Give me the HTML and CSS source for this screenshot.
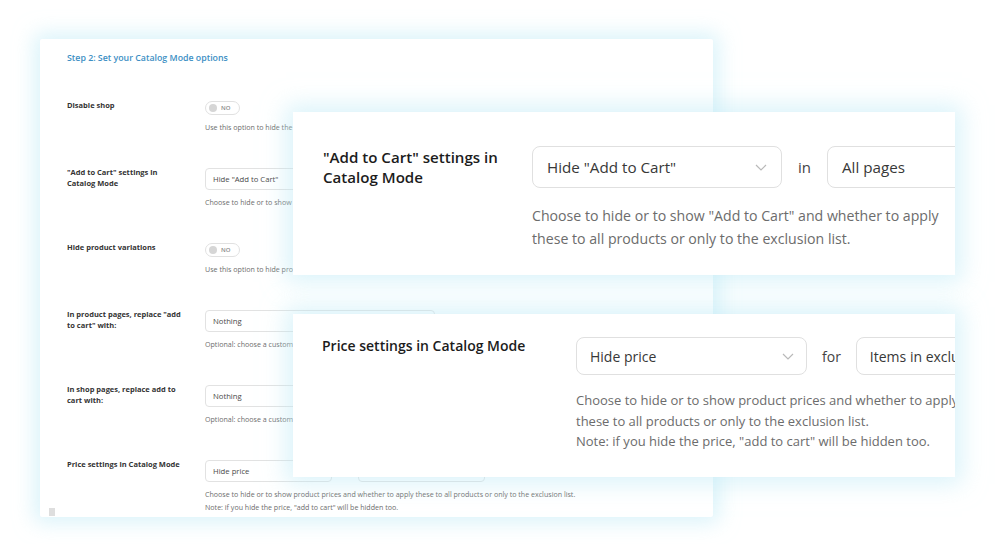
FILE: index.html
```html
<!DOCTYPE html>
<html lang="en">
<head>
<meta charset="utf-8">
<title>Catalog Mode options</title>
<link rel="stylesheet" href="styles.css">
</head>
<body>
<div class="stage">
  <section class="back">
    <h2 class="back-title">Step 2: Set your Catalog Mode options</h2>

    <div class="b-row">
      <div class="b-label">Disable shop</div>
      <div class="b-field">
        <div class="b-toggle"><span class="b-knob"></span><span class="b-toggle-text">NO</span></div>
        <p class="b-desc">Use this option to hide the "Cart" page, "Checkout" page and all the "Add to Cart" buttons in the shop.</p>
      </div>
    </div>

    <div class="b-row">
      <div class="b-label">"Add to Cart" settings in<br>Catalog Mode</div>
      <div class="b-field">
        <div class="b-controls">
          <div class="b-select b-select-sm">Hide "Add to Cart"</div>
        </div>
        <p class="b-desc">Choose to hide or to show "Add to Cart" and whether to apply these to all products or only to the exclusion list.</p>
      </div>
    </div>

    <div class="b-row">
      <div class="b-label">Hide product variations</div>
      <div class="b-field">
        <div class="b-toggle"><span class="b-knob"></span><span class="b-toggle-text">NO</span></div>
        <p class="b-desc">Use this option to hide product variations in the product pages.</p>
      </div>
    </div>

    <div class="b-row">
      <div class="b-label">In product pages, replace "add<br>to cart" with:</div>
      <div class="b-field">
        <div class="b-select b-select-lg">Nothing</div>
        <p class="b-desc">Optional: choose a custom button or content to replace "add to cart" in product pages.</p>
      </div>
    </div>

    <div class="b-row">
      <div class="b-label">In shop pages, replace add to<br>cart with:</div>
      <div class="b-field">
        <div class="b-select b-select-lg">Nothing</div>
        <p class="b-desc">Optional: choose a custom button or content to replace "add to cart" in shop pages.</p>
      </div>
    </div>

    <div class="b-row b-row-last">
      <div class="b-label">Price settings in Catalog Mode</div>
      <div class="b-field">
        <div class="b-controls b-controls-wide">
          <div class="b-select b-select-sm">Hide price</div>
          <div class="b-select b-select-sm"></div>
        </div>
        <p class="b-desc">Choose to hide or to show product prices and whether to apply these to all products or only to the exclusion list.<br>Note: if you hide the price, "add to cart" will be hidden too.</p>
      </div>
    </div>

    <span class="b-scroll"></span>
  </section>

  <section class="front f1">
    <div class="f-label">"Add to Cart" settings in<br>Catalog Mode</div>
    <div class="f-field">
      <div class="f-controls">
        <div class="f-select f-select-main">
          <span>Hide "Add to Cart"</span>
          <svg class="chev" width="12" height="7" viewBox="0 0 12 7"><polyline points="1,1 6,6 11,1"/></svg>
        </div>
        <span class="f-word">in</span>
        <div class="f-select f-select-second"><span>All pages</span></div>
      </div>
      <p class="f-desc">Choose to hide or to show "Add to Cart" and whether to apply<br>these to all products or only to the exclusion list.</p>
    </div>
  </section>

  <section class="front f2">
    <div class="f-label">Price settings in Catalog Mode</div>
    <div class="f-field">
      <div class="f-controls">
        <div class="f-select f-select-main">
          <span>Hide price</span>
          <svg class="chev" width="12" height="7" viewBox="0 0 12 7"><polyline points="1,1 6,6 11,1"/></svg>
        </div>
        <span class="f-word">for</span>
        <div class="f-select f-select-second"><span>Items in exclusion list</span></div>
      </div>
      <p class="f-desc">Choose to hide or to show product prices and whether to apply<br>these to all products or only to the exclusion list.<br>Note: if you hide the price, "add to cart" will be hidden too.</p>
    </div>
  </section>
</div>
</body>
</html>
```

FILE: styles.css
```css
html, body {
  margin: 0;
  padding: 0;
  background: #ffffff;
}

body {
  font-family: "Open Sans", "Noto Sans", sans-serif;
}

.stage {
  position: relative;
  width: 1000px;
  height: 544px;
  overflow: hidden;
  background: #ffffff;
}

/* ---------- back (small) settings panel ---------- */
.back {
  position: absolute;
  left: 40px;
  top: 39px;
  width: 673px;
  height: 478px;
  box-sizing: border-box;
  padding: 13px 0 0 27px;
  background: #ffffff;
  border-radius: 2px;
  box-shadow: 0 0 20px 6px rgba(190, 234, 246, 0.55);
  overflow: hidden;
}

.back-title {
  margin: 0 0 35.5px;
  font-size: 8.8px;
  line-height: 12px;
  font-weight: 600;
  color: #3d8fc4;
}

.b-row {
  display: grid;
  grid-template-columns: 138px 1fr;
  padding-bottom: 33px;
}

.b-row-last {
  padding-bottom: 0;
}

.b-label {
  font-size: 7.5px;
  line-height: 11px;
  font-weight: 700;
  color: #333333;
}

.b-field {
  padding-top: 1.5px;
}

.b-controls {
  display: flex;
  align-items: center;
}

.b-controls-wide {
  gap: 26px;
}

.b-toggle {
  box-sizing: border-box;
  width: 35px;
  height: 14px;
  border: 1px solid #e1e1e1;
  border-radius: 7px;
  display: flex;
  align-items: center;
  padding-left: 3px;
  gap: 4px;
  background: #ffffff;
}

.b-knob {
  width: 8px;
  height: 8px;
  border-radius: 50%;
  background: #d6d6d6;
}

.b-toggle-text {
  font-size: 6px;
  font-weight: 600;
  color: #8a8a8a;
  line-height: 8px;
}

.b-select {
  box-sizing: border-box;
  height: 22px;
  border: 1px solid #e2e2e2;
  border-radius: 4px;
  padding-left: 7px;
  display: flex;
  align-items: center;
  font-size: 7.7px;
  color: #4a4a4a;
  white-space: nowrap;
  background: #ffffff;
  flex: none;
}

.b-select-sm {
  width: 127px;
}

.b-select-lg {
  width: 230px;
}

.b-desc {
  margin: 6px 0 0;
  font-size: 7.1px;
  line-height: 12.5px;
  color: #6d6d6d;
  white-space: nowrap;
}

.b-scroll {
  position: absolute;
  left: 9px;
  bottom: 1px;
  width: 6px;
  height: 8px;
  background: #dedede;
}

/* ---------- front (zoomed) cards ---------- */
.front {
  position: absolute;
  left: 293px;
  width: 662px;
  height: 163px;
  box-sizing: border-box;
  background: #ffffff;
  display: flex;
  overflow: hidden;
  box-shadow: 0 0 22px 7px rgba(190, 234, 246, 0.55);
}

.f1 {
  top: 112px;
  padding: 34px 0 0 30px;
}

.f2 {
  top: 314px;
  padding: 23px 0 0 29px;
}

.f-label {
  flex: none;
  font-weight: 600;
  color: #1c1c1c;
}

.f1 .f-label {
  width: 209px;
  margin-top: 1px;
  font-size: 15.1px;
  line-height: 20px;
}

.f2 .f-label {
  width: 254px;
  font-size: 14px;
  line-height: 18px;
}

.f-field {
  flex: none;
  width: 600px;
}

.f-controls {
  display: flex;
  align-items: center;
}

.f1 .f-controls {
  gap: 16px;
}

.f2 .f-controls {
  gap: 15px;
}

.f-select {
  box-sizing: border-box;
  border: 1px solid #e0e0e0;
  border-radius: 8px;
  display: flex;
  align-items: center;
  justify-content: space-between;
  color: #383838;
  white-space: nowrap;
  background: #ffffff;
}

.f1 .f-select {
  height: 42px;
  padding: 0 14px;
  font-size: 15.2px;
}

.f2 .f-select {
  height: 38px;
  padding: 0 12px 0 13px;
  font-size: 14px;
}

.f1 .f-select-main {
  width: 250px;
}

.f2 .f-select-main {
  width: 231px;
}

.f-select-second {
  width: 220px;
  flex: none;
}

.chev {
  flex: none;
}

.chev polyline {
  fill: none;
  stroke: #b9b9b9;
  stroke-width: 1.2;
}

.f-word {
  color: #444444;
}

.f1 .f-word {
  font-size: 15px;
}

.f2 .f-word {
  font-size: 14px;
}

.f-desc {
  margin: 0;
  color: #6c6c6c;
  white-space: nowrap;
}

.f1 .f-desc {
  margin-top: 16px;
  font-size: 14.15px;
  line-height: 23px;
}

.f2 .f-desc {
  margin-top: 15px;
  font-size: 13px;
  line-height: 20.7px;
}
```
